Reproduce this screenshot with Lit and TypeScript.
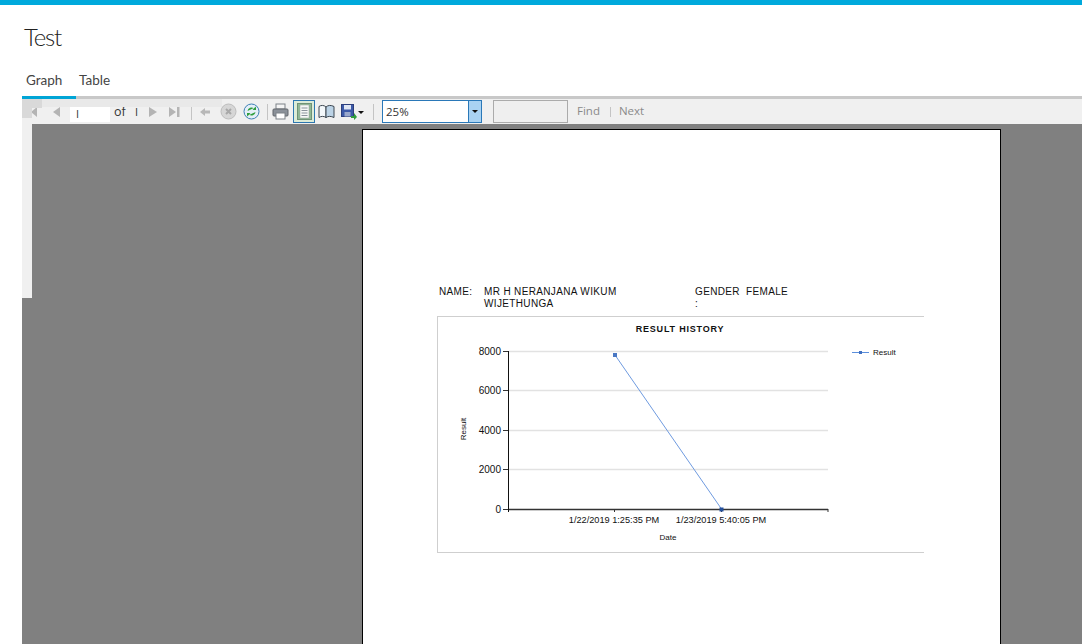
import { LitElement, html, css, svg } from 'lit';
import { customElement } from 'lit/decorators.js';

const ticks = [
  { y: 351.5, label: '8000' },
  { y: 390.5, label: '6000' },
  { y: 430.5, label: '4000' },
  { y: 469.5, label: '2000' },
  { y: 509.5, label: '0' },
];

const tri = (points: string, extra = '') => html`
  <svg class="ico" width="12" height="14" viewBox="0 0 12 14">
    <polygon points=${points} fill="#b4b4b4"></polygon>
    ${extra ? svg`<rect x=${extra} y="2" width="2.5" height="10" fill="#b4b4b4"></rect>` : ''}
  </svg>
`;

@customElement('result-chart')
export class ResultChart extends LitElement {
  static styles = css`
    :host { display: block; }
    svg { display: block; font-family: 'Liberation Sans', Arial, sans-serif; fill: #111; }
    .title { font-size: 9px; font-weight: 700; letter-spacing: 0.8px; }
    .val { font-size: 10px; }
    .small { font-size: 9.2px; }
    .tiny { font-size: 8px; }
  `;

  render() {
    return html`
      <svg width="486" height="235" viewBox="438 317 486 235">
        <text class="title" x="680" y="332" text-anchor="middle">RESULT HISTORY</text>
        ${ticks.map(
          (t) => svg`
            <line x1="509" x2="828" y1=${t.y} y2=${t.y} stroke=${t.label === '0' ? '#333' : '#e2e2e2'} stroke-width=${t.label === '0' ? 1.5 : 1.3}></line>
            <line x1="503" x2="509" y1=${t.y} y2=${t.y} stroke="#333"></line>
            <text class="val" x="501" y=${t.y + 3.5} text-anchor="end">${t.label}</text>
          `
        )}
        <line x1="508.5" x2="508.5" y1="351" y2="512" stroke="#111"></line>
        <line x1="614.5" x2="614.5" y1="509" y2="512" stroke="#333"></line>
        <line x1="721.5" x2="721.5" y1="509" y2="512" stroke="#333"></line>
        <line x1="828" x2="828" y1="509" y2="512" stroke="#333"></line>
        <line x1="615" y1="355" x2="721.5" y2="509" stroke="#6f9be0" stroke-width="1"></line>
        <rect x="613" y="353" width="4" height="4" fill="#4a78c4"></rect>
        <rect x="719.5" y="507.5" width="4" height="4" fill="#24509c"></rect>
        <text class="small" x="614" y="523" text-anchor="middle">1/22/2019 1:25:35 PM</text>
        <text class="small" x="721" y="523" text-anchor="middle">1/23/2019 5:40:05 PM</text>
        <text class="tiny" x="668" y="540" text-anchor="middle">Date</text>
        <text class="tiny" transform="translate(466 429) rotate(-90)" text-anchor="middle">Result</text>
        <line x1="852" x2="869" y1="352.5" y2="352.5" stroke="#5b8fdc"></line>
        <rect x="859" y="351" width="3" height="3" fill="#3f6fc0"></rect>
        <text class="tiny" x="873" y="355">Result</text>
      </svg>
    `;
  }
}

@customElement('report-toolbar')
export class ReportToolbar extends LitElement {
  static styles = css`
    :host {
      display: flex;
      align-items: center;
      height: 25px;
      background: #f0f0f0;
      font-family: 'Open Sans', sans-serif;
      font-size: 11.5px;
      color: #333;
    }
    .ico { display: block; flex: none; }
    .first { margin-left: 6px; }
    .gap { margin-left: 10px; }
    .page-input {
      width: 34px;
      height: 15px;
      margin: 6px 0 0 8px;
      padding-left: 6px;
      background: #fff;
      line-height: 13px;
      font-size: 11px;
    }
    .of { margin: -1px 0 0 4px; width: 21px; font-size: 12.5px; }
    .count { width: 12px; margin-top: -1px; font-size: 11px; }
    .sep { width: 1px; height: 16px; background: #c4c4c4; flex: none; }
    .selected {
      display: flex;
      align-items: center;
      justify-content: center;
      width: 20px;
      height: 21px;
      margin-left: 4px;
      border: 1px solid #2d77b0;
      background: #dcecd8;
    }
    .zoom {
      display: flex;
      align-items: stretch;
      width: 98px;
      height: 21px;
      margin-left: 8px;
      border: 1px solid #2a78b8;
      background: #fff;
      line-height: 21px;
    }
    .zoom span { flex: 1; padding-left: 3px; }
    .zoom i {
      display: flex;
      align-items: center;
      justify-content: center;
      width: 12px;
      background: #a9d2f2;
      border-left: 1px solid #2a78b8;
    }
    .caret { width: 0; height: 0; border: 3px solid transparent; border-top: 3px solid #111; border-bottom: 0; }
    .find {
      width: 73px;
      height: 21px;
      margin-left: 11px;
      border: 1px solid #ababab;
      background: #efefef;
    }
    .link { color: #8a8a8a; margin-top: -2px; }
  `;

  render() {
    return html`
      <span class="first">${tri('3,7 9,2 9,12', '0.5')}</span>
      <span class="gap">${tri('3,7 10,2 10,12')}</span>
      <div class="page-input">I</div>
      <div class="of">of</div>
      <div class="count">I</div>
      <span>${tri('2,2 10,7 2,12')}</span>
      <span class="gap">${tri('0,2 7,7 0,12', '8')}</span>
      <div class="sep" style="margin-left:10px"></div>
      <svg class="ico" style="margin-left:7px" width="13" height="12" viewBox="0 0 13 12">
        <path d="M1 6 6 2v2.5h5v3H6V10z" fill="#b8b8b8"></path>
      </svg>
      <svg class="ico" style="margin-left:8px" width="17" height="17" viewBox="0 0 17 17">
        <circle cx="8.5" cy="8.5" r="7.5" fill="#d6d6d6" stroke="#bdbdbd"></circle>
        <path d="M6 6l5 5M11 6l-5 5" stroke="#a8a8a8" stroke-width="2"></path>
      </svg>
      <svg class="ico" style="margin-left:6px" width="17" height="17" viewBox="0 0 17 17">
        <circle cx="8.5" cy="8.5" r="7.5" fill="#e4eff8" stroke="#3d7fb5"></circle>
        <path d="M4.5 8a4 4 0 0 1 6.5-2.5l-1.5 1.5H13V3.5L12 4.500" fill="#2f9e3d"></path>
        <path d="M12.500 9a4 4 0 0 1-6.500 2.500l1.500-1.500H4v3.500l1-1" fill="#2f9e3d"></path>
      </svg>
      <div class="sep" style="margin-left:7px"></div>
      <svg class="ico" style="margin-left:4px" width="17" height="17" viewBox="0 0 17 17">
        <rect x="4" y="1" width="9" height="5" fill="#f4f4f4" stroke="#7c8288"></rect>
        <rect x="1" y="6" width="15" height="7" rx="1" fill="#8b9199" stroke="#62676d"></rect>
        <rect x="4" y="10" width="9" height="6" fill="#fff" stroke="#7c8288"></rect>
      </svg>
      <div class="selected">
        <svg class="ico" width="15" height="17" viewBox="0 0 15 17">
          <rect x="0.500" y="0.500" width="14" height="16" fill="#8fb896" stroke="#6f9276"></rect>
          <rect x="3" y="2" width="9" height="13" fill="#f6f8f6" stroke="#9aa39b" stroke-width="0.500"></rect>
          <path d="M4.500 5h6M4.500 7.500h6M4.500 10h6M4.500 12.500h6" stroke="#8b939c"></path>
        </svg>
      </div>
      <svg class="ico" style="margin-left:3px" width="17" height="15" viewBox="0 0 17 15">
        <path d="M1 2.500C3 1 6 1 8 3v10.500C6 12 3 12 1 13.500z" fill="#f4f8fb" stroke="#3c4650"></path>
        <path d="M8 3c2-2 5-2 8-.500v11c-3-1.500-6-1.500-8 0z" fill="#bcd3e6" stroke="#3c4650"></path>
      </svg>
      <svg class="ico" style="margin-left:6px" width="16" height="16" viewBox="0 0 16 16">
        <rect x="0.500" y="0.500" width="12" height="12" fill="#3c59a8" stroke="#2d3f7d"></rect>
        <rect x="3" y="1" width="7" height="4.500" fill="#dfe6f4"></rect>
        <rect x="3.500" y="8" width="6" height="4.500" fill="#9aa8cc"></rect>
        <path d="M10 12h3V9l3 4-3 3v-2h-3z" fill="#2f9e3d"></path>
      </svg>
      <div class="caret" style="margin:2px 0 0 1px"></div>
      <div class="sep" style="margin-left:9px"></div>
      <div class="zoom">
        <span>25%</span>
        <i><b class="caret"></b></i>
      </div>
      <div class="find"></div>
      <div class="link" style="margin-left:9px">Find</div>
      <div class="sep" style="margin-left:10px;height:10px"></div>
      <div class="link" style="margin-left:8px">Next</div>
    `;
  }
}

@customElement('app-root')
export class AppRoot extends LitElement {
  static styles = css`
    :host {
      display: flex;
      flex-direction: column;
      height: 644px;
      overflow: hidden;
      background: #fff;
      border-top: 5px solid #00a9dc;
      box-sizing: border-box;
      font-family: 'Open Sans', sans-serif;
    }
    h1 {
      margin: 0;
      padding: 16px 0 0 24px;
      height: 50px;
      font-family: Lato, sans-serif;
      font-size: 24px;
      font-weight: 300;
      letter-spacing: -1.2px;
      line-height: 32px;
      color: #222;
      box-sizing: border-box;
    }
    .tabs {
      display: flex;
      height: 44px;
      margin-left: 22px;
      box-sizing: border-box;
      border-bottom: 3px solid #c8c8c8;
      font-family: Lato, sans-serif;
      font-size: 13.5px;
      color: #444;
    }
    .tab { padding: 16px 13px 0 4px; margin-bottom: -3px; line-height: 18px; }
    .tab.active { border-bottom: 3px solid #00a5d6; width: 54px; box-sizing: border-box; }
    .tab + .tab { padding-left: 3px; }
    .viewer { position: relative; flex: 1; margin-left: 22px; display: flex; flex-direction: column; min-height: 0; }
    .strip { position: absolute; left: 0; top: 0; width: 10px; height: 199px; background: #f0f0f0; }
    .top-shade { position: absolute; left: 0; top: 0; width: 200px; height: 8px; background: #e9e9e9; }
    .corner { position: absolute; left: 0; top: 0; width: 20px; height: 9px; background: #d9d9d9; }
    .corner-low { position: absolute; left: 0; top: 9px; width: 10px; height: 10px; background: #d9d9d9; }
    .canvas { flex: 1; min-height: 0; background: #808080; padding: 5px 81px 0 340px; }
    .page {
      height: 600px;
      background: #fff;
      border: 1px solid #000;
      box-sizing: border-box;
      padding: 156px 76px 0 74px;
      font-family: 'Liberation Sans', Arial, sans-serif;
      color: #111;
    }
    .info {
      display: grid;
      grid-template-columns: 45px 211px 51px 1fr;
      font-size: 10px;
      line-height: 12px;
      letter-spacing: 0.35px;
      padding-left: 2px;
      height: 30px;
    }
    .frame {
      border: 1px solid #cfcfcf;
      border-right: 0;
      width: 487px;
      box-sizing: border-box;
    }
  `;

  render() {
    return html`
      <h1>Test</h1>
      <div class="tabs">
        <div class="tab active">Graph</div>
        <div class="tab">Table</div>
      </div>
      <div class="viewer">
        <report-toolbar></report-toolbar>
        <div class="canvas">
          <div class="page">
            <div class="info">
              <div>NAME:</div>
              <div>MR H NERANJANA WIKUM<br />WIJETHUNGA</div>
              <div>GENDER<br />:</div>
              <div>FEMALE</div>
            </div>
            <div class="frame"><result-chart></result-chart></div>
          </div>
        </div>
        <div class="strip"></div>
        <div class="top-shade"></div>
        <div class="corner"></div>
        <div class="corner-low"></div>
      </div>
    `;
  }
}
